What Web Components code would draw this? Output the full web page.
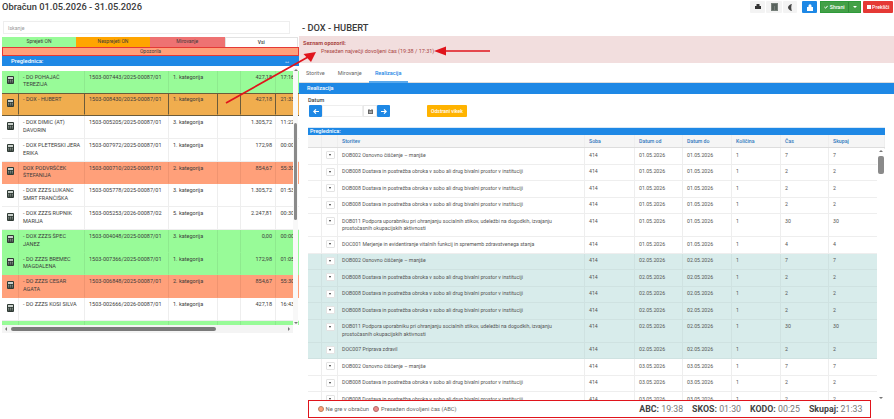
<!DOCTYPE html>
<html>
<head>
<meta charset="utf-8">
<title>Obračun</title>
<style>
  html, body { margin: 0; height: 100%; overflow: hidden; background: #fff; }
  body { font-family: Roboto, "Liberation Sans", sans-serif; color: #333; }
</style>
</head>
<body>
<obr-app></obr-app>
<script>
const BLUE = "#1e88e5";

const calcIcon = `<svg width="7" height="8" viewBox="0 0 7 8"><rect width="7" height="8" rx="1" fill="#2f3a34"/><rect x="1" y="1" width="5" height="2" fill="#c9d0cb"/><path d="M1 4.3h5M1 5.9h5" stroke="#aab3ad" stroke-width=".8" stroke-dasharray="1.2 .7"/></svg>`;

class ObrButton extends HTMLElement {
  connectedCallback() {
    const c = this.getAttribute("color") || "#f3f3f3";
    const w = this.getAttribute("w") || 15;
    this.attachShadow({ mode: "open" }).innerHTML = `
      <style>
        :host { display: inline-flex; align-items: center; justify-content: center; gap: 1.5px;
          width: ${w}px; height: 12px; background: ${c}; color: #fff; font-size: 5.2px; font-weight: 500;
          border-radius: 1px; box-sizing: border-box; flex: none; }
      </style><slot></slot>`;
  }
}
customElements.define("obr-button", ObrButton);

class ObrHeader extends HTMLElement {
  connectedCallback() {
    this.attachShadow({ mode: "open" }).innerHTML = `
      <style>
        :host { display: flex; align-items: flex-start; height: 20px; }
        h1 { margin: 1px 0 0 2px; font-size: 9.3px; font-weight: 500; line-height: 11px; color: #3a3a3a; flex: 1; }
        .tools { display: flex; margin: 1px 1px 0 0; }
        .split { display: flex; width: 41px; height: 12px; background: #43a047; border: 1px solid #2e9a3a; box-sizing: border-box; margin: 0 2px 0 3px; color: #fff; font-size: 5.2px; font-weight: 500; }
        .split span { flex: 1; display: flex; align-items: center; justify-content: center; gap: 1.5px; }
        .split i { width: 11px; display: flex; align-items: center; justify-content: center; border-left: 1px solid #2f8a37; }
        .car { width: 0; height: 0; border: 2px solid transparent; border-top: 2px solid #fff; border-bottom: 0; }
      </style>
      <h1>Obračun 01.05.2026 - 31.05.2026</h1>
      <div class="tools">
        <obr-button><svg width="6" height="6" viewBox="0 0 6 6"><path d="M1.5 0h3v2h1.5v3H0V2h1.5z" fill="#333"/></svg></obr-button>
        <span style="width:1px"></span>
        <obr-button w="16"><svg width="7" height="8" viewBox="0 0 7 8"><rect width="7" height="8" fill="#77807a"/><path d="M1 2h5M1 4h2M4 4h2M1 6h2M4 6h2" stroke="#3f4742"/></svg></obr-button>
        <span style="width:1px"></span>
        <obr-button w="14"><svg width="5" height="7" viewBox="0 0 5 7"><path d="M4 0C1.5.6 0 2 0 3.5S1.5 6.4 4 7C3 5.5 3 1.5 4 0z" fill="#444"/></svg></obr-button>
        <span style="width:5px"></span>
        <obr-button color="${BLUE}"><svg width="6" height="7" viewBox="0 0 6 7"><path d="M1.5 3V1.8a1.5 1.5 0 0 1 3 0V3H6v4H0V3z" fill="#fff"/></svg></obr-button>
        <div class="split"><span><svg width="4" height="4" viewBox="0 0 4 4"><path d="M.4 2l1.2 1.2L3.7.8" stroke="#fff" fill="none"/></svg>Shrani</span><i><b class="car"></b></i></div>
        <obr-button color="#e53935" w="30"><svg width="4" height="4" viewBox="0 0 4 4"><path d="M0 0h4v4H0z" fill="#fff"/></svg>Prekliči</obr-button>
      </div>`;
  }
}
customElements.define("obr-header", ObrHeader);

// vertical scrollbar lies over the rows
class ObrScrollbar extends HTMLElement {
  connectedCallback() {
    const from = this.getAttribute("from"), size = this.getAttribute("size");
    this.attachShadow({ mode: "open" }).innerHTML = `
      <style>
        :host { position: absolute; display: block; background: #f8f8f8; }
        b { position: absolute; background: #8a8a8a; border-radius: 2px; left: 1px; right: 1px; top: ${from}px; height: ${size}px; }
        i { position: absolute; left: 50%; margin-left: -2px; width: 0; height: 0; border: 2px solid transparent; }
        .a { top: 1px; border-bottom-color: #777; border-top: 0; }
        .z { bottom: 1px; border-top-color: #777; border-bottom: 0; }
      </style><i class="a"></i><b></b><i class="z"></i>`;
  }
}
customElements.define("obr-scrollbar", ObrScrollbar);

const patients = [
  ["- DO POHAJAČ<br>TEREZIJA", "1503-007443/2025-00087/01", "1. kategorija", "427,18", "17:16", "g"],
  ["- DOX - HUBERT", "1503-008430/2025-00087/01", "1. kategorija", "427,18", "21:33", "s"],
  ["- DOX DIMIC (AT)<br>DAVORIN", "1503-005205/2025-00087/01", "3. kategorija", "1.305,72", "11:22", ""],
  ["- DOX PLETERSKI JERA<br>ERIKA", "1503-007972/2025-00087/01", "1. kategorija", "172,98", "00:00", ""],
  ["DOX PODVRŠČEK<br>ŠTEFANIJA", "1503-000710/2025-00087/01", "2. kategorija", "854,67", "55:30", "o"],
  ["- DOX ZZZS LUKANC<br>SMRT FRANČIŠKA", "1503-005778/2025-00087/01", "3. kategorija", "1.305,72", "01:53", ""],
  ["- DOX ZZZS RUPNIK<br>MARIJA", "1503-005253/2026-00087/02", "5. kategorija", "2.247,81", "00:30", ""],
  ["- DOX ZZZS ŠPEC<br>JANEZ", "1503-004048/2025-00087/01", "3. kategorija", "0,00", "00:00", "g"],
  ["- DO ZZZS BREMEC<br>MAGDALENA", "1503-007366/2025-00087/01", "1. kategorija", "172,98", "01:05", "g"],
  ["- DO ZZZS CESAR<br>AGATA", "1503-006848/2025-00087/01", "2. kategorija", "854,67", "55:30", "o"],
  ["- DO ZZZS KOSI SILVA", "1503-002666/2026-00087/01", "1. kategorija", "427,18", "16:43", ""],
];

class ObrPatients extends HTMLElement {
  connectedCallback() {
    const rows = patients.map(([name, no, cat, sum, time, cls]) => `
      <div class="row ${cls}">
        <div class="c ic">${calcIcon}</div><div class="c">${name}</div><div class="c">${no}</div>
        <div class="c">${cat}</div><div class="c"></div><div class="c r">${sum}</div><div class="c t">${time}</div>
      </div>`).join("");
    this.attachShadow({ mode: "open" }).innerHTML = `
      <style>
        :host { display: block; width: 297px; margin-left: 2px; font-size: 5.5px; color: #3c3c3c; }
        .search { height: 13px; width: 287px; margin: 1px 0 3px 1px; border: 1px solid #eee; box-sizing: border-box; font-size: 5.2px; color: #999; padding: 3px 4px; line-height: 6px; }
        .filters { display: grid; grid-template-columns: 74px 74px 74.5px 73.5px; height: 9.5px; line-height: 9.5px; text-align: center; font-size: 5px; }
        .filters div:nth-child(1) { background: #98fb98; }
        .filters div:nth-child(2) { background: #ffa500; }
        .filters div:nth-child(3) { background: #ee7272; }
        .filters div:nth-child(4) { background: #fff; border: 1px solid #e2e2e2; border-width: 1px 1px 0; font-weight: 500; line-height: 8.5px; }
        .warn { height: 9px; line-height: 7px; text-align: center; font-size: 5px; background: #ffa07a; border: 1px solid #e53935; box-sizing: border-box; }
        .bar { height: 10.5px; background: ${BLUE}; color: #fff; display: flex; justify-content: space-between; align-items: center; padding: 0 9px 0 9px; font-size: 5.8px; font-weight: 500; }
        .grid { position: relative; height: 259px; overflow: hidden; padding-top: 4.7px; box-sizing: border-box; }
        .row { display: grid; grid-template-columns: 17px 66px 84px 49px 23px 35px 26px; box-sizing: border-box; width: 300px; height: 22.75px; }
        .row.end { height: 5px; }
        .c { border-right: 1px solid #eee; border-bottom: 1px solid #eee; padding: 3px 3px 0 4px; line-height: 7.6px; box-sizing: border-box; overflow: hidden; white-space: nowrap; }
        .ic { padding: 5.5px 0 0 5px; }
        .r { text-align: right; }
        .t { padding-left: 4.5px; }
        .g { background: #98fb98; } .g .c { border-color: #98fb98; border-right-color: #8eea8e; }
        .o { background: #ffa07a; } .o .c { border-color: #ffa07a; border-right-color: #f09470; }
        .s { background: #f0ad4e; border-top: 1px solid #6b5b3a; border-bottom: 1px solid #6b5b3a; }
        .s .c { border-color: #f0ad4e; border-right: 1px solid #6b5b3a; padding-top: 2px; }
        .s .ic { padding-top: 4.5px; }
        obr-scrollbar { right: 1px; top: 2px; bottom: 0; width: 5px; }
        .hs { display: flex; align-items: center; height: 8px; width: 291px; background: #f4f4f4; padding: 0 3px; box-sizing: border-box; }
        .hs .thumb { display: block; flex: none; width: 205px; height: 4px; background: #7a7a7a; border-radius: 2px; margin-left: 4px; }
        .hs .l, .hs .e { flex: none; width: 0; height: 0; border: 2px solid transparent; }
        .hs .l { border-right-color: #777; border-left: 0; }
        .hs .e { border-left-color: #777; border-right: 0; margin-left: auto; }
      </style>
      <div class="search">Iskanje</div>
      <div class="filters"><div>Sprejeti ON</div><div>Nesprejeti ON</div><div>Mirovanje</div><div>Vsi</div></div>
      <div class="warn">Opozorila</div>
      <div class="bar"><span>Preglednica:</span><span>↔</span></div>
      <div class="grid">${rows}
        <div class="row end g"><div class="c"></div><div class="c"></div><div class="c"></div><div class="c"></div><div class="c"></div><div class="c"></div><div class="c"></div></div>
        <obr-scrollbar from="55" size="97"></obr-scrollbar>
      </div>
      <div class="hs"><div class="l"></div><div class="thumb"></div><div class="e"></div></div>`;
  }
}
customElements.define("obr-patients", ObrPatients);

const S = {
  a: "DOB002 Osnovno čiščenje – manjše",
  b: "DOB008 Dostava in postrežba obroka v sobo ali drug bivalni prostor v instituciji",
  c: "DOB011 Podpora uporabniku pri ohranjanju socialnih stikov, udeležbi na dogodkih, izvajanju<br>prostočasnih okupacijskih aktivnosti",
  d: "DOC001 Merjenje in evidentiranje vitalnih funkcij in sprememb zdravstvenega stanja",
  e: "DOC007 Priprava zdravil",
};
const services = [
  ["a", 1, 7, 0], ["b", 1, 2, 0], ["b", 1, 2, 0], ["b", 1, 2, 0], ["c", 1, 30, 0], ["d", 1, 4, 0],
  ["a", 2, 7, 1], ["b", 2, 2, 1], ["b", 2, 2, 1], ["b", 2, 2, 1], ["c", 2, 30, 1], ["e", 2, 2, 1],
  ["a", 3, 7, 0], ["b", 3, 2, 0], ["b", 3, 2, 0],
];

class ObrServices extends HTMLElement {
  connectedCallback() {
    const cols = ["", "", "Storitev", "Soba", "Datum od", "Datum do", "Količina", "Čas", "Skupaj"];
    const head = cols.map(c => `<div class="c">${c}</div>`).join("");
    const rows = services.map(([k, day, t, shaded]) => {
      const d = `0${day}.05.2026`;
      return `<div class="row ${shaded ? "sh" : ""} ${k === "c" ? "tall" : ""}">
        <div class="c"></div><div class="c m"><b><i></i></b></div><div class="c">${S[k]}</div>
        <div class="c">414</div><div class="c">${d}</div><div class="c">${d}</div><div class="c">1</div><div class="c">${t}</div><div class="c">${t}</div>
      </div>`;
    }).join("");
    this.attachShadow({ mode: "open" }).innerHTML = `
      <style>
        :host { display: block; margin: 0 9px; font-size: 5.2px; color: #555; position: relative; height: 273px; overflow: hidden; }
        .bar { height: 8px; background: ${BLUE}; color: #fff; font-size: 5.5px; font-weight: 500; line-height: 7px; padding-left: 2px; border-top: 1px solid #d7e8f7; box-sizing: border-box; }
        .row { display: grid; grid-template-columns: 14px 16px 247px 50px 48px 49px 49px 48px 56px; height: 16.5px; box-sizing: border-box; }
        .row.tall { height: 23px; }
        .row.head { height: 13px; background: #f5f5f5; border-bottom: 1px solid #ddd; color: #2f78bd; font-weight: 500; }
        .c { border-right: 1px solid #eee; border-bottom: 1px solid #eee; padding: 3.5px 0 0 4px; line-height: 7.5px; box-sizing: border-box; white-space: nowrap; overflow: hidden; }
        .head .c { border-bottom: 0; padding-top: 2.5px; }
        .sh { background: #d8eceb; }
        .sh .c { border-color: #cfe2e1; }
        .m { padding: 3px 0 0 3.5px; }
        .m b { display: flex; width: 9px; height: 8px; background: #fff; border: 1px solid #e3e3e3; box-sizing: border-box; align-items: center; justify-content: center; border-radius: 1px; }
        .m i { border: 1.5px solid transparent; border-top: 2px solid #333; border-bottom: 0; }
        obr-scrollbar { right: 0; top: 22px; bottom: 0; width: 8px; background: #fff; }
      </style>
      <div class="bar">Preglednica:</div>
      <div class="row head">${head}</div>
      ${rows}
      <obr-scrollbar from="7" size="18"></obr-scrollbar>`;
  }
}
customElements.define("obr-services", ObrServices);

class ObrFooter extends HTMLElement {
  connectedCallback() {
    this.attachShadow({ mode: "open" }).innerHTML = `
      <style>
        :host { position: absolute; left: 308px; top: 400px; width: 563px; height: 18px; box-sizing: border-box; border: 1.5px solid #e0141c; background: #fff;
          display: flex; align-items: center; padding: 0 7.5px 0 8.5px; font-size: 5.8px; color: #666; }
        i { width: 6px; height: 6px; border-radius: 50%; border: 1px solid #bb8; box-sizing: border-box; margin-right: 2px; }
        .x { background: #ffa07a; border-color: #b9805f; }
        .y { background: #ee8a8a; border-color: #b56a6a; margin-left: 4px; }
        .sum { margin-left: auto; display: flex; gap: 9px; font-size: 8.8px; color: #777; }
        b { color: #444; font-weight: 700; }
      </style>
      <i class="x"></i>Ne gre v obračun<i class="y"></i>Presežen dovoljeni čas (ABC)
      <div class="sum"><span><b>ABC:</b> 19:38</span><span><b>SKOS:</b> 01:30</span><span><b>KODO:</b> 00:25</span><span><b>Skupaj:</b> 21:33</span></div>`;
  }
}
customElements.define("obr-footer", ObrFooter);

class ObrDetail extends HTMLElement {
  connectedCallback() {
    this.attachShadow({ mode: "open" }).innerHTML = `
      <style>
        :host { display: block; flex: 1; min-width: 0; position: relative; }
        h2 { margin: 2px 0 0 3px; height: 14px; font-size: 9.3px; line-height: 11px; font-weight: 500; color: #3a3a3a; }
        .alert { height: 27px; background: #f2dede; color: #a94442; font-size: 5.5px; padding: 3px 4px; box-sizing: border-box; line-height: 8px; }
        .alert b { font-weight: 700; display: block; }
        .alert span { margin-left: 18px; }
        .tabs { display: flex; height: 20px; border-bottom: 1px solid #ddd; box-sizing: border-box; font-size: 5.5px; color: #666; padding-left: 1px; }
        .tabs div { padding: 7px 6px 0; line-height: 7px; margin-right: 1px; }
        .tabs .on { color: ${BLUE}; font-weight: 500; border-bottom: 2px solid #5aa9ec; width: 27px; text-align: center; margin-bottom: -1px; }
        .bar2 { height: 11px; background: ${BLUE}; color: #fff; font-size: 5.5px; font-weight: 500; line-height: 10px; padding-left: 8px; box-sizing: border-box; }
        .datum { font-size: 5.5px; font-weight: 500; padding: 3px 0 0 9px; line-height: 6px; height: 33px; box-sizing: border-box; color: #444; }
        .ctl { display: flex; margin: 2px 0 0 1px; align-items: flex-start; }
        .ctl u { width: 13px; height: 12px; background: ${BLUE}; color: #fff; display: flex; align-items: center; justify-content: center; text-decoration: none; border-radius: 1px; }
        .ctl em { width: 41px; height: 12px; border: 1px solid #eee; box-sizing: border-box; }
        .ctl s { width: 14px; height: 12px; border: 1px solid #e8e8e8; box-sizing: border-box; display: flex; align-items: center; justify-content: center; }
        .ctl .ob { margin-left: 37px; width: 40px; height: 12px; background: #ffb300; color: #fff; font-size: 5px; font-weight: 500; display: flex; align-items: center; justify-content: center; border-radius: 1px; }
        svg { display: block; }
      </style>
      <h2>- DOX - HUBERT</h2>
      <div class="alert"><b>Seznam opozoril:</b><span>Presežen največji dovoljeni čas (19:38 / 17:31)</span></div>
      <div class="tabs"><div>Storitve</div><div>Mirovanje</div><div class="on">Realizacija</div></div>
      <div class="bar2">Realizacija</div>
      <div class="datum">Datum
        <div class="ctl">
          <u><svg width="6" height="5" viewBox="0 0 6 5"><path d="M6 2.5H1M3 .3L.8 2.5 3 4.7" stroke="#fff" stroke-width="1.1" fill="none"/></svg></u>
          <em></em>
          <s><svg width="5" height="5" viewBox="0 0 5 5"><path d="M0 1h5v4H0z" fill="#666"/><path d="M1 0v1M4 0v1" stroke="#666"/><path d="M1 2.3h3M1 3.6h3" stroke="#ddd" stroke-width=".6"/></svg></s>
          <u><svg width="6" height="5" viewBox="0 0 6 5"><path d="M0 2.5h5M3 .3l2.2 2.2L3 4.7" stroke="#fff" stroke-width="1.1" fill="none"/></svg></u>
          <div class="ob">Odstrani vikek</div>
        </div>
      </div>
      <obr-services></obr-services>`;
  }
}
customElements.define("obr-detail", ObrDetail);

class ObrArrows extends HTMLElement {
  connectedCallback() {
    this.attachShadow({ mode: "open" }).innerHTML = `
      <style>:host { position: absolute; inset: 0; display: block; pointer-events: none; }</style>
      <svg width="894" height="419" viewBox="0 0 894 419">
        <path d="M226 103L308 57" stroke="#e0141c" stroke-width="1.7"/>
        <path d="M316 52L303.5 54 311 62z" fill="#e0141c"/>
        <path d="M490 51H442" stroke="#e0141c" stroke-width="1.7"/>
        <path d="M434 51L446 46.5V55.5z" fill="#e0141c"/>
      </svg>`;
  }
}
customElements.define("obr-arrows", ObrArrows);

class ObrApp extends HTMLElement {
  connectedCallback() {
    this.attachShadow({ mode: "open" }).innerHTML = `
      <style>
        :host { display: block; width: 894px; height: 419px; position: relative; overflow: hidden; }
        .cols { display: flex; }
      </style>
      <obr-header></obr-header>
      <div class="cols"><obr-patients></obr-patients><obr-detail></obr-detail></div>
      <obr-footer></obr-footer>
      <obr-arrows></obr-arrows>`;
  }
}
customElements.define("obr-app", ObrApp);
</script>
</body>
</html>
